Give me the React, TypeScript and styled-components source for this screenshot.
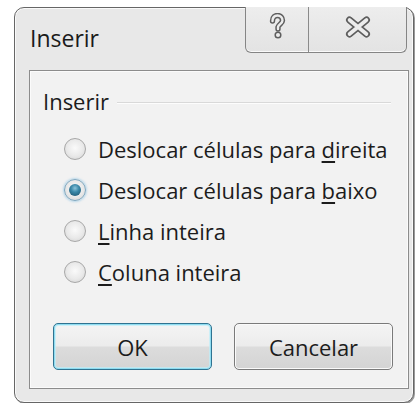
import React from 'react';
import styled, { createGlobalStyle } from 'styled-components';

const uiFont = `'Open Sans', 'Noto Sans', 'DejaVu Sans', sans-serif`;

const GlobalStyle = createGlobalStyle`
  html, body {
    margin: 0;
    padding: 0;
    background: #ffffff;
  }
  body {
    font-family: ${uiFont};
    color: #1c1c1c;
  }
`;

const Page = styled.div`
  padding: 7px 0 0 14px;
`;

const Window = styled.div`
  width: 400px;
  height: 396px;
  box-sizing: border-box;
  border: 1px solid #666666;
  border-radius: 10px;
  background: #e8e8e8;
  box-shadow: inset 0 0 0 1px rgba(255, 255, 255, 0.75), 1px 1px 0 #9a9a9a;
  display: flex;
  flex-direction: column;
`;

const TitleBar = styled.div`
  height: 62px;
  display: flex;
  align-items: flex-start;
  padding-left: 15px;
  flex-shrink: 0;
`;

const Title = styled.div`
  margin-top: 16px;
  font-size: 23px;
  line-height: 28px;
  color: #1a1a1a;
`;

const CaptionButtons = styled.div`
  margin-left: auto;
  margin-right: 6px;
  margin-top: -1px;
  height: 45px;
  display: flex;
  border: 1px solid #858585;
  border-top: none;
  border-radius: 0 0 6px 6px;
  background: linear-gradient(#ededed, #e3e3e3);
  box-shadow: inset 0 -1px 0 rgba(255, 255, 255, 0.8);
  overflow: hidden;
`;

const CaptionButton = styled.div<{ $w: number }>`
  width: ${(p) => p.$w}px;
  display: flex;
  align-items: center;
  justify-content: center;
  padding-bottom: 6px;
  box-sizing: border-box;
  & + & {
    border-left: 1px solid #8a8a8a;
  }
`;

const Client = styled.div`
  flex: 1;
  margin: 0 4px 13px 14px;
  border: 1px solid #8c8c8c;
  background: #f2f2f2;
  box-shadow: inset 0 0 0 1px #fbfbfb;
  display: flex;
  flex-direction: column;
`;

const GroupHeader = styled.div`
  display: flex;
  align-items: center;
  gap: 8px;
  padding: 16px 17px 0 13px;
`;

const GroupLabel = styled.span`
  font-size: 22px;
  line-height: 28px;
`;

const GroupLine = styled.div`
  flex: 1;
  height: 1px;
  margin-top: 2px;
  background: #d9d9d9;
  box-shadow: 0 1px 0 #fdfdfd;
`;

const Options = styled.div`
  display: flex;
  flex-direction: column;
  margin-top: 13px;
  padding-left: 34px;
`;

const OptionRow = styled.label`
  height: 41px;
  display: flex;
  align-items: center;
  gap: 12px;
  font-size: 22px;
  color: #1c1c1c;
`;

const Radio = styled.span<{ $checked?: boolean }>`
  width: 22px;
  height: 22px;
  box-sizing: border-box;
  border-radius: 50%;
  border: 1px solid ${(p) => (p.$checked ? '#7fa8c0' : '#a8a8a8')};
  background: radial-gradient(circle at 50% 45%, #fafafa 0%, #e9e9e9 55%, #cfcfcf 100%);
  box-shadow: ${(p) => (p.$checked ? '0 0 2px 1px rgba(150, 200, 230, 0.6)' : 'none')};
  display: flex;
  align-items: center;
  justify-content: center;
  flex-shrink: 0;

  &::after {
    content: '';
    display: ${(p) => (p.$checked ? 'block' : 'none')};
    width: 12px;
    height: 12px;
    border-radius: 50%;
    background: radial-gradient(circle at 50% 35%, #8cc4db 0%, #3a88a8 40%, #1b4f69 100%);
  }
`;

const Key = styled.span`
  text-decoration: underline;
  text-underline-offset: 3px;
`;

const ButtonRow = styled.div`
  display: flex;
  gap: 22px;
  margin-top: 31px;
  padding-left: 23px;
`;

const Button = styled.div<{ $default?: boolean }>`
  width: 159px;
  height: 47px;
  box-sizing: border-box;
  border-radius: 5px;
  border: 1px solid ${(p) => (p.$default ? '#2f7391' : '#7a7a7a')};
  background: linear-gradient(#f4f4f4 0%, #ececec 48%, #dcdcdc 52%, #d4d4d4 100%);
  box-shadow: ${(p) =>
    p.$default
      ? 'inset 0 0 0 1px #8fdcf0, inset 0 0 0 2px rgba(190, 238, 250, 0.7)'
      : 'inset 0 0 0 1px #fafafa'};
  display: flex;
  align-items: center;
  justify-content: center;
  font-size: 22px;
  color: #1c1c1c;
`;

// outlined caption glyphs: a dark wide stroke with a light narrow stroke over it
const glyphPath = 'M3.5 8 C3.5 4 6 2.5 8.5 2.5 C11.5 2.5 13.5 4.5 13.5 7.5 C13.5 10.5 9.5 11.5 9 14 L9 16';

const HelpGlyph = () => (
  <svg width="17" height="27" viewBox="0 0 17 27">
    <path d={glyphPath} fill="none" stroke="#5e5e5e" strokeWidth="5.4" strokeLinecap="round" />
    <path d={glyphPath} fill="none" stroke="#ececec" strokeWidth="2.4" strokeLinecap="round" />
    <circle cx="9" cy="22" r="2.8" fill="#ececec" stroke="#5e5e5e" strokeWidth="1.5" />
  </svg>
);

const CloseGlyph = () => (
  <svg width="26" height="22" viewBox="0 0 26 22">
    <path d="M4.5 4 L21.5 18 M21.5 4 L4.5 18" stroke="#5e5e5e" strokeWidth="7" strokeLinecap="round" />
    <path d="M4.5 4 L21.5 18 M21.5 4 L4.5 18" stroke="#ececec" strokeWidth="3.6" strokeLinecap="round" />
  </svg>
);

const App = () => (
  <Page>
    <GlobalStyle />
    <Window>
      <TitleBar>
        <Title>Inserir</Title>
        <CaptionButtons>
          <CaptionButton $w={62}>
            <HelpGlyph />
          </CaptionButton>
          <CaptionButton $w={98}>
            <CloseGlyph />
          </CaptionButton>
        </CaptionButtons>
      </TitleBar>
      <Client>
        <GroupHeader>
          <GroupLabel>Inserir</GroupLabel>
          <GroupLine />
        </GroupHeader>
        <Options>
          <OptionRow>
            <Radio />
            <span>
              Deslocar células para <Key>d</Key>ireita
            </span>
          </OptionRow>
          <OptionRow>
            <Radio $checked />
            <span>
              Deslocar células para <Key>b</Key>aixo
            </span>
          </OptionRow>
          <OptionRow>
            <Radio />
            <span>
              <Key>L</Key>inha inteira
            </span>
          </OptionRow>
          <OptionRow>
            <Radio />
            <span>
              <Key>C</Key>oluna inteira
            </span>
          </OptionRow>
        </Options>
        <ButtonRow>
          <Button $default>OK</Button>
          <Button>Cancelar</Button>
        </ButtonRow>
      </Client>
    </Window>
  </Page>
);

export default App;
